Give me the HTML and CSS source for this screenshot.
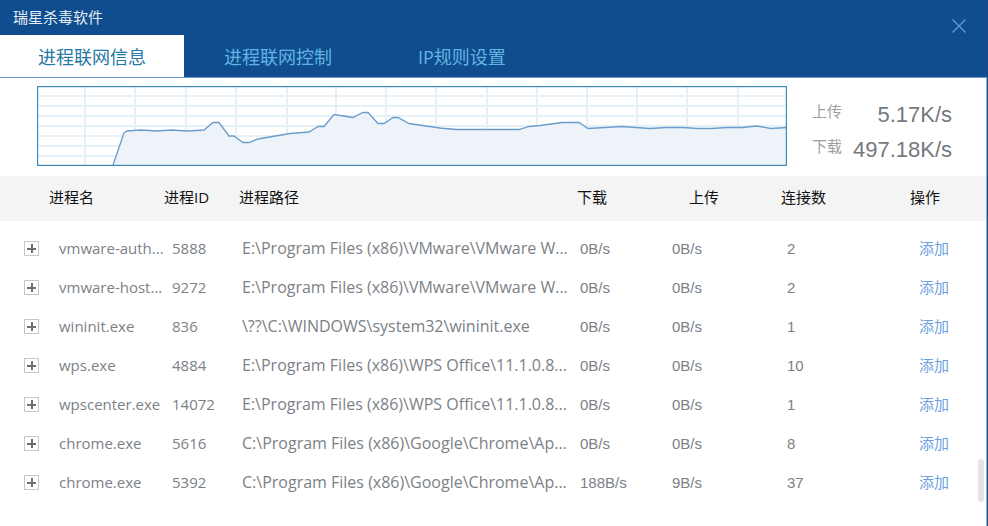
FILE: index.html
```html
<!DOCTYPE html>
<html lang="zh-CN">
<head>
    <meta charset="UTF-8">
    <title>瑞星杀毒软件</title>
    <link rel="stylesheet" href="styles.css">
</head>
<body>
<div class="window">
    <header class="header">
        <div class="titlebar">
            <h1>瑞星杀毒软件</h1>
            <button class="close" type="button" aria-label="关闭">
                <svg width="16" height="16" viewBox="0 0 16 16"><path d="M1.5 1.5 14.5 14.5M14.5 1.5 1.5 14.5"/></svg>
            </button>
        </div>
        <nav class="tabs">
            <button class="tab on" type="button">进程联网信息</button>
            <button class="tab" type="button">进程联网控制</button>
            <button class="tab" type="button">IP规则设置</button>
        </nav>
    </header>

    <main class="content">
        <section class="traffic">
            <svg class="chart" viewBox="0 0 750 80" preserveAspectRatio="none">
                <!-- 网格 -->
                <path class="grid" d="M0 10H750M0 20H750M0 30H750M0 40H750M0 50H750M0 60H750M0 70H750M48 0V80M98 0V80M149 0V80M199 0V80M250 0V80M299 0V80M349 0V80M399 0V80M450 0V80M500 0V80M550 0V80M600 0V80M650 0V80M701 0V80"/>
                <path class="area" d="M76 79 87 47 90 45 104 44 120 45 134 44 150 45 167 44 176 36.500 182 36.500 192 50 197 50 206 56.500 212 56.500 221 53 253 47.500 272 46 281 40.500 287 40.500 297 28.500 316 31.500 326 26.500 331 26.500 341 37.500 347 37.500 356 31.500 361 31.500 372 37.500 403 42 419 43.500 482 43.500 492 40.500 503 39.500 525 36.500 542 36.500 551 42.500 585 40.500 613 42.500 629 41.500 646 41.500 661 42.500 674 42.500 690 41.500 705 41.500 720 40 734 42.500 750 41.500V79Z"/>
                <path class="line" d="M76 79 87 47 90 45 104 44 120 45 134 44 150 45 167 44 176 36.500 182 36.500 192 50 197 50 206 56.500 212 56.500 221 53 253 47.500 272 46 281 40.500 287 40.500 297 28.500 316 31.500 326 26.500 331 26.500 341 37.500 347 37.500 356 31.500 361 31.500 372 37.500 403 42 419 43.500 482 43.500 492 40.500 503 39.500 525 36.500 542 36.500 551 42.500 585 40.500 613 42.500 629 41.500 646 41.500 661 42.500 674 42.500 690 41.500 705 41.500 720 40 734 42.500 750 41.500"/>
                <rect class="frame" x="0.5" y="0.5" width="749" height="79"/>
            </svg>
            <dl class="speed">
                <div><dt>上传</dt><dd>5.17K/s</dd></div>
                <div><dt>下载</dt><dd>497.18K/s</dd></div>
            </dl>
        </section>

        <table class="list">
            <colgroup>
                <col class="c-open"><col class="c-name"><col class="c-id"><col class="c-path">
                <col class="c-down"><col class="c-up"><col class="c-conn"><col class="c-act">
            </colgroup>
            <thead>
                <tr>
                    <th></th>
                    <th>进程名</th>
                    <th>进程ID</th>
                    <th>进程路径</th>
                    <th>下载</th>
                    <th class="up">上传</th>
                    <th>连接数</th>
                    <th>操作</th>
                </tr>
            </thead>
            <tbody>
                <tr>
                    <td class="open"><button class="plus" type="button" aria-label="展开"></button></td>
                    <td class="name">vmware-auth...</td>
                    <td class="pid">5888</td>
                    <td class="path">E:\Program Files (x86)\VMware\VMware W...</td>
                    <td class="num down">0B/s</td>
                    <td class="num">0B/s</td>
                    <td class="num conn">2</td>
                    <td class="act"><a href="#">添加</a></td>
                </tr>
                <tr>
                    <td class="open"><button class="plus" type="button" aria-label="展开"></button></td>
                    <td class="name">vmware-host...</td>
                    <td class="pid">9272</td>
                    <td class="path">E:\Program Files (x86)\VMware\VMware W...</td>
                    <td class="num down">0B/s</td>
                    <td class="num">0B/s</td>
                    <td class="num conn">2</td>
                    <td class="act"><a href="#">添加</a></td>
                </tr>
                <tr>
                    <td class="open"><button class="plus" type="button" aria-label="展开"></button></td>
                    <td class="name">wininit.exe</td>
                    <td class="pid">836</td>
                    <td class="path">\??\C:\WINDOWS\system32\wininit.exe</td>
                    <td class="num down">0B/s</td>
                    <td class="num">0B/s</td>
                    <td class="num conn">1</td>
                    <td class="act"><a href="#">添加</a></td>
                </tr>
                <tr>
                    <td class="open"><button class="plus" type="button" aria-label="展开"></button></td>
                    <td class="name">wps.exe</td>
                    <td class="pid">4884</td>
                    <td class="path">E:\Program Files (x86)\WPS Office\11.1.0.8...</td>
                    <td class="num down">0B/s</td>
                    <td class="num">0B/s</td>
                    <td class="num conn">10</td>
                    <td class="act"><a href="#">添加</a></td>
                </tr>
                <tr>
                    <td class="open"><button class="plus" type="button" aria-label="展开"></button></td>
                    <td class="name">wpscenter.exe</td>
                    <td class="pid">14072</td>
                    <td class="path">E:\Program Files (x86)\WPS Office\11.1.0.8...</td>
                    <td class="num down">0B/s</td>
                    <td class="num">0B/s</td>
                    <td class="num conn">1</td>
                    <td class="act"><a href="#">添加</a></td>
                </tr>
                <tr>
                    <td class="open"><button class="plus" type="button" aria-label="展开"></button></td>
                    <td class="name">chrome.exe</td>
                    <td class="pid">5616</td>
                    <td class="path">C:\Program Files (x86)\Google\Chrome\Ap...</td>
                    <td class="num down">0B/s</td>
                    <td class="num">0B/s</td>
                    <td class="num conn">8</td>
                    <td class="act"><a href="#">添加</a></td>
                </tr>
                <tr>
                    <td class="open"><button class="plus" type="button" aria-label="展开"></button></td>
                    <td class="name">chrome.exe</td>
                    <td class="pid">5392</td>
                    <td class="path">C:\Program Files (x86)\Google\Chrome\Ap...</td>
                    <td class="num down">188B/s</td>
                    <td class="num">9B/s</td>
                    <td class="num conn">37</td>
                    <td class="act"><a href="#">添加</a></td>
                </tr>
            </tbody>
        </table>
    </main>
    <div class="thumb"></div>
</div>
</body>
</html>
```
FILE: styles.css
```css
* {margin:0; padding:0; box-sizing:border-box;}
body {font-family:"Open Sans", "Noto Sans CJK SC", sans-serif; font-size:15px; color:#7c8187; background:#fff;}
button {border:0; background:none; font:inherit; cursor:pointer;}
.window {display:flex; flex-direction:column; position:relative; min-height:100vh; border-right:1px solid #1b4a87;}

/* 标题栏 */
.header {background:#0f4d8f; border-bottom:1px solid #6f9cc8;}
.titlebar {display:flex; justify-content:space-between; height:35px; padding:0 20px 0 13px;}
.titlebar h1 {font-size:15px; font-weight:normal; line-height:34px; color:#e6eef8;}
.close {width:16px; height:16px; margin-top:18px;}
.close svg {display:block; fill:none; stroke:#5b9ce0; stroke-width:1.3;}
.tabs {display:flex;}
.tab {width:194px; height:42px; padding-left:40px; font-size:18px; line-height:44px; text-align:left; color:#62b5e2;}
.tab.on {width:184px; padding-left:38px; background:#fff; color:#2878a5;}

.content {flex:1; border-right:1px solid #8ab4e0;}

/* 流量图 */
.traffic {display:flex; gap:25px; padding:8px 34px 8px 37px;}
.chart {flex:1; min-width:0; height:80px;}
.grid {fill:none; stroke:#e6f0f7; stroke-width:2;}
.area {fill:#edf3f8;}
.line {fill:none; stroke:#6a9dcc; stroke-width:1.3;}
.frame {fill:none; stroke:#3d8ab5; stroke-width:1.4;}
.speed {width:140px; padding-top:12px;}
.speed div {display:flex; justify-content:space-between; height:35px;}
.speed dt {line-height:26px; color:#a0a0a0;}
.speed dd {font:22px/34px "Liberation Sans", Arial, sans-serif; color:#74797f;}

/* 进程列表 */
.list {width:100%; table-layout:fixed; border-collapse:collapse;}
.c-open {width:49px;}
.c-name {width:115px;}
.c-id {width:75px;}
.c-down {width:95px;}
.c-up {width:109px;}
.c-conn {width:129px;}
.c-act {width:76px;}
.list th {height:45px; padding-bottom:4px; background:#f4f4f4; font-weight:normal; text-align:left; color:#111;}
.list th.up {padding-left:17px;}
.list tbody::before {content:""; display:block; height:8px;}
.list td {height:39px; padding-bottom:2px; line-height:20px; white-space:nowrap;}
.list .open {padding-bottom:0;}
.list .name {padding-left:10px;}
.list .pid {padding-left:8px;}
.list .path {padding-left:3px; font-size:16px;}
.list .num {padding-bottom:0; font-family:"Liberation Sans", Arial, sans-serif;}
.list .down {padding-left:3px;}
.list .conn {padding-left:6px;}
.list .act {padding-left:9px;}
.list a {color:#6f9fe0; text-decoration:none;}
.plus {display:block; width:15px; height:15px; margin-left:24px; border:1px solid #c8c8c8;
    background:linear-gradient(#6a7076,#6a7076) center/9px 2px no-repeat, linear-gradient(#6a7076,#6a7076) center/2px 9px no-repeat;}
.thumb {position:absolute; right:3px; top:459px; width:6px; height:43px; border-radius:3px; background:#e4e4e4;}
```
